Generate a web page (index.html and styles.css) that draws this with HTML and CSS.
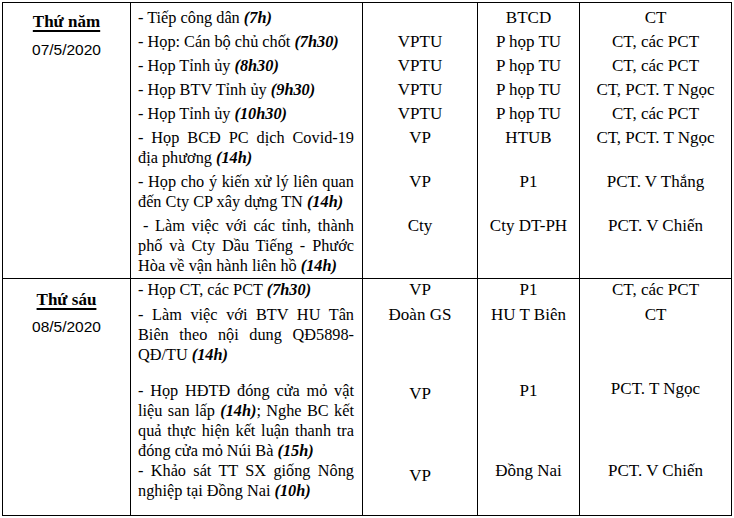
FILE: index.html
```html
<!DOCTYPE html>
<html lang="vi">
<head>
<meta charset="utf-8">
<title>Lịch công tác</title>
<link rel="stylesheet" href="styles.css">
</head>
<body>
<table class="sched">
  <colgroup>
    <col class="c-day"><col class="c-task"><col class="c-org"><col class="c-place"><col class="c-who">
  </colgroup>
  <tbody>
    <tr class="day-start d1r1">
      <td class="day d1" rowspan="8"><div class="dname">Thứ năm</div><div class="date">07/5/2020</div></td>
      <td class="task">- Tiếp công dân <span class="tm">(7h)</span></td>
      <td class="mid"></td>
      <td class="mid">BTCD</td>
      <td class="mid">CT</td>
    </tr>
    <tr>
      <td class="task">- Họp: Cán bộ chủ chốt <span class="tm">(7h30)</span></td>
      <td class="mid">VPTU</td>
      <td class="mid">P họp TU</td>
      <td class="mid">CT, các PCT</td>
    </tr>
    <tr>
      <td class="task">- Họp Tỉnh ủy <span class="tm">(8h30)</span></td>
      <td class="mid">VPTU</td>
      <td class="mid">P họp TU</td>
      <td class="mid">CT, các PCT</td>
    </tr>
    <tr>
      <td class="task">- Họp BTV Tỉnh ủy <span class="tm">(9h30)</span></td>
      <td class="mid">VPTU</td>
      <td class="mid">P họp TU</td>
      <td class="mid">CT, PCT. T Ngọc</td>
    </tr>
    <tr>
      <td class="task">- Họp Tỉnh ủy <span class="tm">(10h30)</span></td>
      <td class="mid">VPTU</td>
      <td class="mid">P họp TU</td>
      <td class="mid">CT, các PCT</td>
    </tr>
    <tr>
      <td class="task"><span class="ln">- Họp BCĐ PC dịch Covid-19</span>địa phương <span class="tm">(14h)</span></td>
      <td class="mid">VP</td>
      <td class="mid">HTUB</td>
      <td class="mid">CT, PCT. T Ngọc</td>
    </tr>
    <tr>
      <td class="task"><span class="ln">- Họp cho ý kiến xử lý liên quan</span>đến Cty CP xây dựng TN <span class="tm">(14h)</span></td>
      <td class="mid">VP</td>
      <td class="mid">P1</td>
      <td class="mid">PCT. V Thắng</td>
    </tr>
    <tr class="d1last">
      <td class="task"><span class="ln indent">- Làm việc với các tỉnh, thành</span><span class="ln">phố và Cty Dầu Tiếng - Phước</span>Hòa về vận hành liên hồ <span class="tm">(14h)</span></td>
      <td class="mid">Cty</td>
      <td class="mid">Cty DT-PH</td>
      <td class="mid">PCT. V Chiến</td>
    </tr>

    <tr class="day-start d2r1">
      <td class="day d2" rowspan="4"><div class="dname">Thứ sáu</div><div class="date">08/5/2020</div></td>
      <td class="task">- Họp CT, các PCT <span class="tm">(7h30)</span></td>
      <td class="mid">VP</td>
      <td class="mid">P1</td>
      <td class="mid">CT, các PCT</td>
    </tr>
    <tr class="d2r2">
      <td class="task"><span class="ln">- Làm việc với BTV HU Tân</span><span class="ln">Biên theo nội dung QĐ5898-</span>QĐ/TU <span class="tm">(14h)</span></td>
      <td class="mid">Đoàn GS</td>
      <td class="mid">HU T Biên</td>
      <td class="mid">CT</td>
    </tr>
    <tr class="d2r3">
      <td class="task"><span class="ln">- Họp HĐTĐ đóng cửa mỏ vật</span><span class="ln">liệu san lấp <span class="tm">(14h)</span>; Nghe BC kết</span><span class="ln">quả thực hiện kết luận thanh tra</span>đóng cửa mỏ Núi Bà <span class="tm">(15h)</span></td>
      <td class="mid lower">VP</td>
      <td class="mid">P1</td>
      <td class="mid higher">PCT. T Ngọc</td>
    </tr>
    <tr class="d2r4">
      <td class="task"><span class="ln">- Khảo sát TT SX giống Nông</span>nghiệp tại Đồng Nai <span class="tm">(10h)</span></td>
      <td class="mid lower">VP</td>
      <td class="mid">Đồng Nai</td>
      <td class="mid higher">PCT. V Chiến</td>
    </tr>
  </tbody>
</table>
</body>
</html>
```

FILE: styles.css
```css
html, body {
  background: #ffffff;
}
body {
  margin: 2px;
  font-family: "Liberation Serif", "Times New Roman", serif;
  font-size: 17px;
  color: #000000;
}
.sched {
  border-collapse: collapse;
  table-layout: fixed;
  width: 729px;
  border: 1px solid #000;
}
.c-day { width: 128px; }
.c-task { width: 232px; }
.c-org { width: 115px; }
.c-place { width: 102px; }
.c-who { width: 152px; }

.sched td {
  vertical-align: top;
  border-left: 1px solid #000;
  border-right: 1px solid #000;
  line-height: 20px;
  padding: 4px 4px 0 4px;
}
.sched tr.day-start td {
  border-top: 1px solid #000;
}
.sched td.task {
  padding-left: 7px;
  padding-right: 8px;
  text-align: left;
  font-size: 16.3px;
  white-space: nowrap;
}
.sched td.mid {
  text-align: center;
  white-space: nowrap;
}
.ln {
  display: block;
  white-space: normal;
  text-align: justify;
  text-align-last: justify;
}
.ln.indent {
  padding-left: 5px;
}
.tm {
  font-weight: bold;
  font-style: italic;
}

.sched td.day {
  text-align: center;
  padding: 9px 2px 0 2px;
}
.sched td.day.d2 {
  padding-top: 11px;
}
.dname {
  font-weight: bold;
  text-decoration: underline;
  text-decoration-thickness: 2px;
  text-underline-offset: 3px;
}
.date {
  font-family: "Liberation Sans", Arial, sans-serif;
  font-size: 15.5px;
  margin-top: 8px;
}
.d2 .date {
  margin-top: 7px;
}

.d1r1 td:not(.day) { padding-top: 5px; }
.d1last td:not(.day) { padding-bottom: 2px; }
.d2r1 td:not(.day) { padding-top: 1px; }
.d2r2 td { padding-top: 5px; }
.d2r3 td { padding-top: 16px; }
.d2r3 td.lower { padding-top: 19px; }
.d2r3 td.higher { padding-top: 14px; }
.d2r4 td { padding-top: 0; padding-bottom: 14px; }
.d2r4 td.lower { padding-top: 5px; }
.d2r4 td.higher { padding-top: 0; margin-top: 0; }
```
